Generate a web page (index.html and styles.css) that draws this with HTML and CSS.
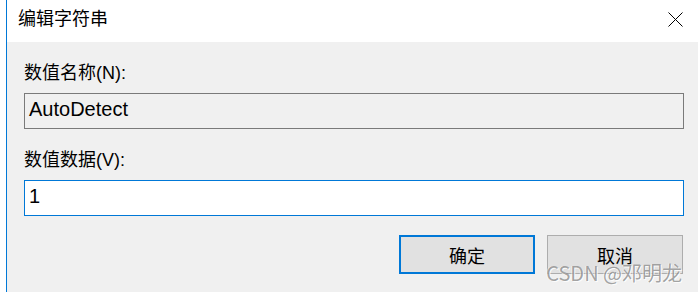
FILE: index.html
```html
<!DOCTYPE html>
<html lang="zh-CN">

<head>
    <meta charset="UTF-8">
    <title>编辑字符串</title>
    <link rel="stylesheet" href="styles.css">
</head>

<body>
    <div class="window">
        <div class="titlebar">
            <span class="title">编辑字符串</span>
            <svg class="close" width="15" height="15" viewBox="0 0 15 15">
                <path d="M0.5 0.5 L14.5 14.5 M14.5 0.5 L0.5 14.5" />
            </svg>
        </div>

        <div class="content">
            <label class="field-label">数值名称(N):</label>
            <div class="field readonly">AutoDetect</div>

            <label class="field-label">数值数据(V):</label>
            <div class="field active">1</div>

            <div class="buttons">
                <button class="btn default">确定</button>
                <button class="btn">取消</button>
            </div>
        </div>

        <div class="watermark">CSDN @邓明龙</div>
    </div>
</body>

</html>
```

FILE: styles.css
```css
/* dialog styles */
body {
    margin: 0;
    padding-left: 6px;
    background-color: #fff;
    font-family: "Liberation Sans", "Noto Sans CJK SC", sans-serif;
    color: #000;
}

.window {
    position: relative;
    height: 292px;
    border-left: 1px solid #0078d7;
    background-color: #f0f0f0;
    overflow: hidden;
}

.titlebar {
    display: flex;
    justify-content: space-between;
    align-items: flex-start;
    height: 42px;
    box-sizing: border-box;
    padding: 7px 15px 0 11px;
    background-color: #fff;
}

.title {
    font-size: 18px;
    line-height: 24px;
}

.close {
    margin-top: 5px;
}

.close path {
    stroke: #000;
    stroke-width: 1;
    fill: none;
}

.content {
    padding: 19px 14px 0 17px;
}

.field-label {
    display: block;
    font-size: 18px;
    line-height: 24px;
    margin-bottom: 8px;
}

.field {
    height: 36px;
    box-sizing: border-box;
    padding: 0 0 3px 4px;
    display: flex;
    align-items: center;
    font-size: 20px;
    margin-bottom: 19px;
}

.field.readonly {
    border: 1px solid #7a7a7a;
    background-color: #f0f0f0;
}

.field.active {
    border: 1px solid #0078d7;
    background-color: #fff;
}

.buttons {
    display: flex;
    justify-content: flex-end;
    gap: 12px;
    padding-right: 1px;
}

.btn {
    width: 136px;
    height: 39px;
    box-sizing: border-box;
    background-color: #e1e1e1;
    border: 1px solid #adadad;
    font-family: "Liberation Sans", "Noto Sans CJK SC", sans-serif;
    font-size: 18px;
    color: #000;
    padding: 0;
}

.btn.default {
    border: 2px solid #0078d7;
}

.watermark {
    position: absolute;
    right: 16px;
    bottom: 9px;
    font-family: "Noto Sans CJK SC", sans-serif;
    font-size: 20px;
    line-height: 20px;
    color: rgba(125, 125, 125, 0.7);
    text-shadow: 1px 1px 0 rgba(255, 255, 255, 0.85), -1px 0 0 rgba(255, 255, 255, 0.5);
}
```
